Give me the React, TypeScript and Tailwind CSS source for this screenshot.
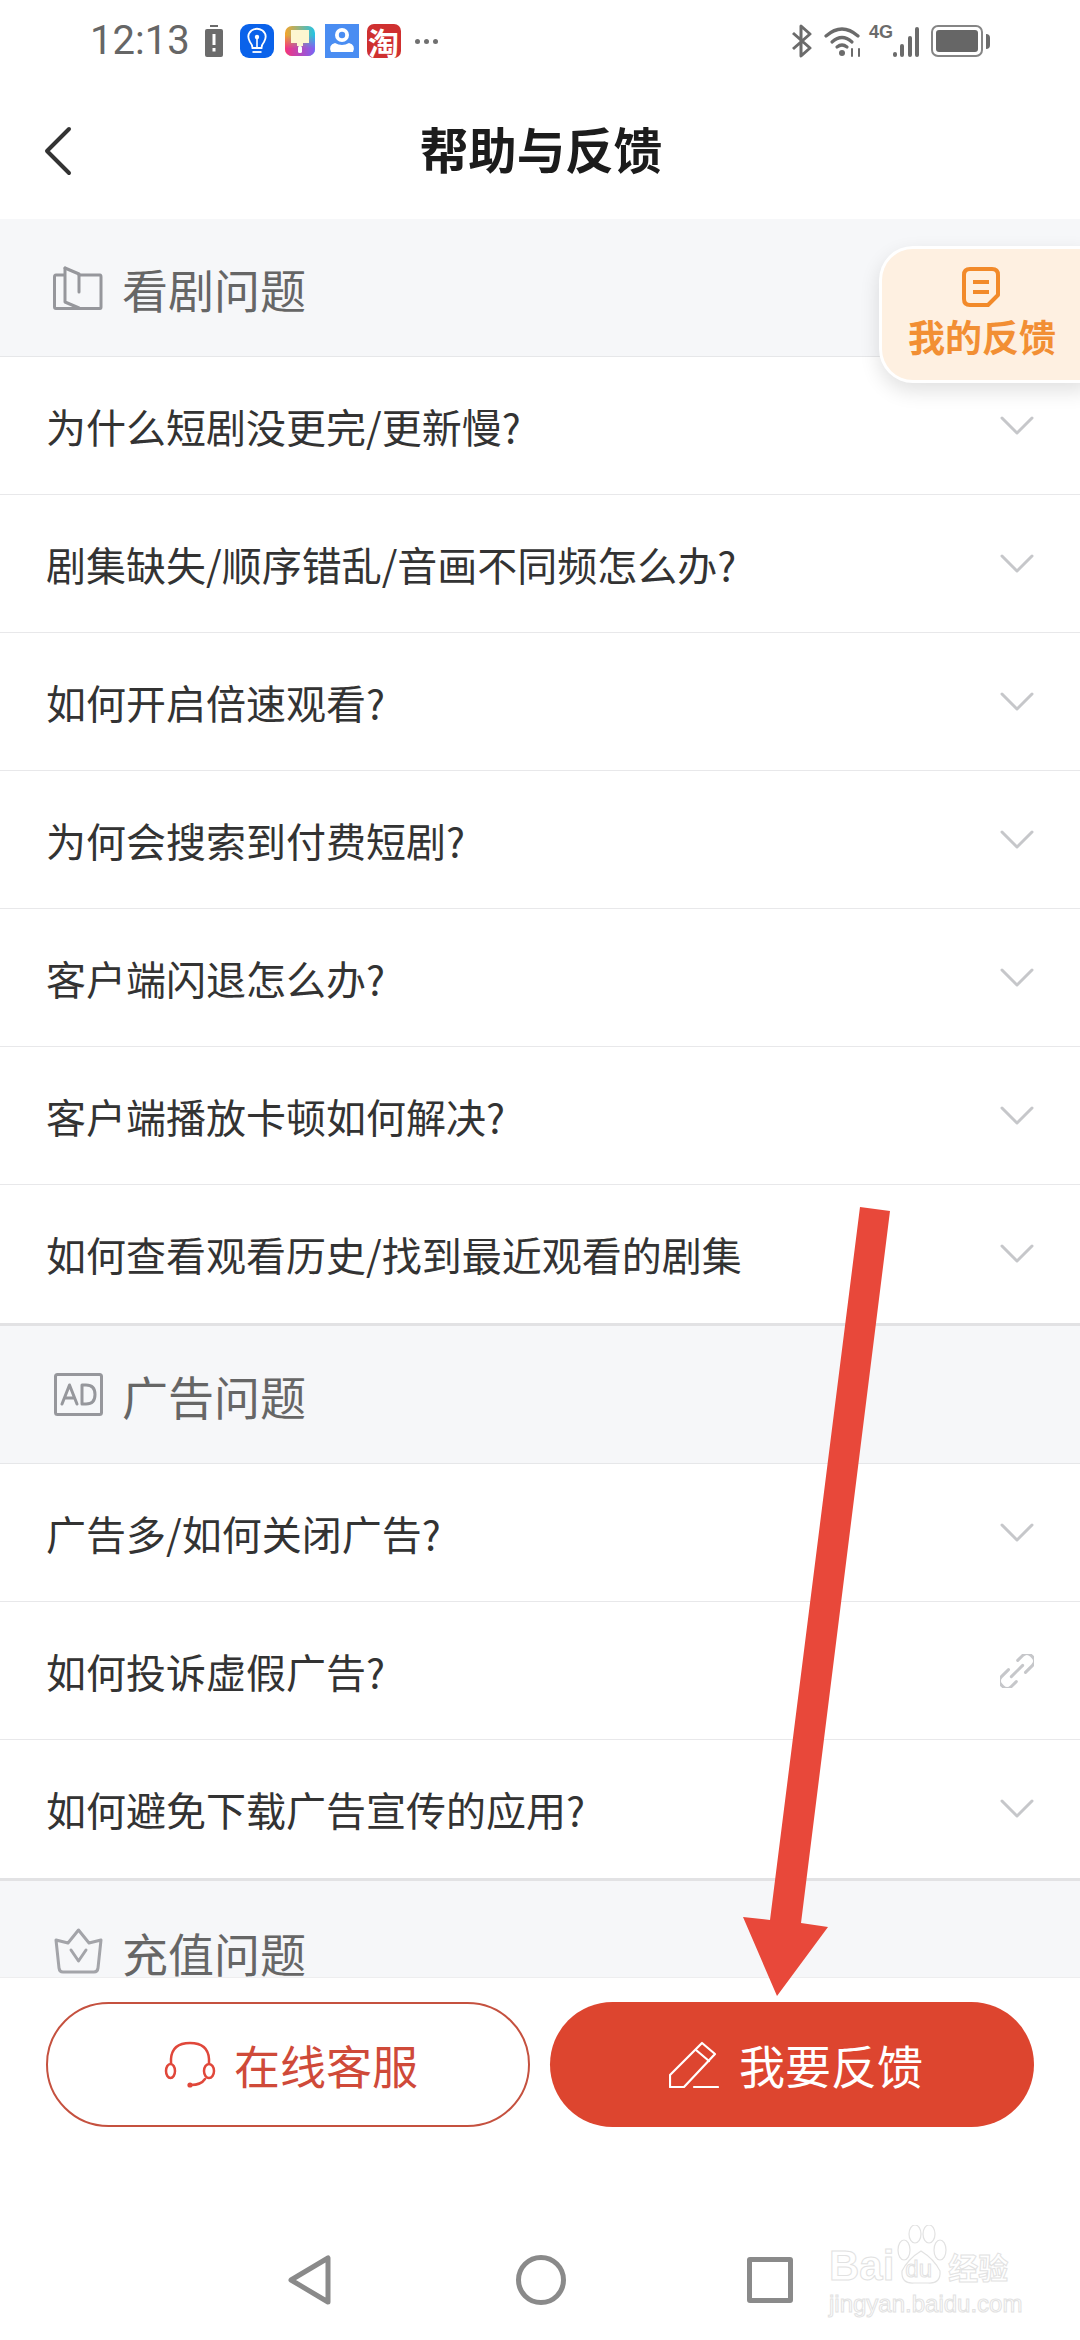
import React from 'react';

const FONT = '"Noto Sans CJK SC", "Noto Sans", sans-serif';

const Chevron = () => (
  <svg width="34" height="20" viewBox="0 0 34 20" fill="none" stroke="#c6c7ca" strokeWidth="3" strokeLinecap="round" strokeLinejoin="round">
    <path d="M2 2 L17 17 L32 2" />
  </svg>
);

const LinkIcon = () => (
  <svg width="34" height="34" viewBox="0 0 34 34" fill="none" stroke="#c6c7ca" strokeWidth="3" strokeLinecap="round" strokeLinejoin="round">
    <g transform="rotate(-45 17 17)">
      <path d="M12 10 H2 Q-4 10 -4 16 V18 Q-4 24 2 24 H9" />
      <path d="M22 24 H32 Q38 24 38 18 V16 Q38 10 32 10 H25" />
      <path d="M9 17 H25" />
    </g>
  </svg>
);

const BookIcon = () => (
  <svg width="50" height="44" viewBox="0 0 50 44" fill="none" stroke="#96979c" strokeWidth="3" strokeLinejoin="round" strokeLinecap="round">
    <path d="M11 9 H3 Q1.5 9 1.5 11 V41 Q1.5 42.5 3 42.5 H47 Q48 42.5 48 41 V11 Q48 9 47 9 H26" />
    <path d="M12 2 L26 8 V26" />
    <path d="M12 2 V36 L26 42" />
  </svg>
);

const AdIcon = () => (
  <svg width="49" height="43" viewBox="0 0 49 43" fill="none" stroke="#96979c" strokeWidth="3" strokeLinejoin="round" strokeLinecap="round">
    <rect x="1.5" y="1.5" width="46" height="40" rx="2" />
    <path d="M8 31 L15.5 12 L23 31 M10.5 25 H20.5" />
    <path d="M28 12 V31 H32 Q41 31 41 21.5 Q41 12 32 12 Z" />
  </svg>
);

const CrownIcon = () => (
  <svg width="49" height="46" viewBox="0 0 49 46" fill="none" stroke="#a3a4a9" strokeWidth="3" strokeLinejoin="round" strokeLinecap="round">
    <path d="M2 12 L14 15 L24.5 2 L35 15 L47 12 L44 40 Q43.5 44 40 44 H9 Q5.5 44 5 40 Z" />
    <path d="M17 22 L24.5 33 L32 22" />
  </svg>
);

const HeadsetIcon = () => (
  <svg width="52" height="48" viewBox="0 0 52 48" fill="none" stroke="#e0473a" strokeWidth="2.5" strokeLinecap="round">
    <path d="M7 22 V18 Q8 2 26 2 Q44 2 45 18 V22" />
    <ellipse cx="6.5" cy="30" rx="4.5" ry="7" />
    <ellipse cx="45" cy="30" rx="5" ry="7" />
    <path d="M41 38 Q37 44 27 44" />
    <circle cx="26" cy="44" r="2.6" fill="#e0473a" stroke="none" />
  </svg>
);

const PencilIcon = () => (
  <svg width="50" height="48" viewBox="0 0 50 48" fill="none" stroke="#ffffff" strokeWidth="2.2" strokeLinecap="round" strokeLinejoin="round">
    <path d="M33 2 L46 13 L15 46 H1 V34 Z" />
    <path d="M27 9 L40 20" />
    <path d="M25 46 H49" />
  </svg>
);

const AppIcons = () => (
  <>
    <svg width="18" height="32" viewBox="0 0 18 32">
      <rect x="5" y="0" width="8" height="2" fill="#6b6b6b" />
      <rect x="0" y="4" width="18" height="28" rx="2" fill="#6b6b6b" />
      <rect x="7.5" y="9" width="3" height="11" fill="#fff" />
      <rect x="7.5" y="23" width="3" height="3.5" fill="#fff" />
    </svg>
    <svg width="34" height="34" viewBox="0 0 34 34" className="ml-[17px]">
      <rect width="34" height="34" rx="9" fill="#0a62ea" />
      <path d="M12.5 24 Q12.5 21 10 18 Q6 11 11.5 6.5 Q17 3 22.5 6.5 Q28 11 24 18 Q21.5 21 21.5 24 Z" fill="none" stroke="#fff" strokeWidth="1.8" />
      <path d="M12.5 28 H21.5" stroke="#fff" strokeWidth="1.8" />
      <circle cx="17" cy="13" r="2.2" fill="#fff" />
      <path d="M17 14 V23" stroke="#fff" strokeWidth="1.6" />
    </svg>
    <svg width="30" height="30" viewBox="0 0 30 30" className="ml-[11px]">
      <defs>
        <linearGradient id="paintTop" x1="0" y1="0" x2="1" y2="0">
          <stop offset="0" stopColor="#f5a52a" />
          <stop offset="1" stopColor="#22c3e6" />
        </linearGradient>
        <linearGradient id="paintBottom" x1="0" y1="0" x2="1" y2="0">
          <stop offset="0" stopColor="#f5327e" />
          <stop offset="1" stopColor="#7c62f6" />
        </linearGradient>
        <linearGradient id="paintFade" x1="0" y1="0" x2="0" y2="1">
          <stop offset="0.3" stopColor="#fff" stopOpacity="0" />
          <stop offset="0.75" stopColor="#fff" stopOpacity="1" />
        </linearGradient>
        <mask id="paintMask">
          <rect width="30" height="30" fill="url(#paintFade)" />
        </mask>
      </defs>
      <rect width="30" height="30" rx="7" fill="url(#paintTop)" />
      <rect width="30" height="30" rx="7" fill="url(#paintBottom)" mask="url(#paintMask)" />
      <path d="M6 4 H24 V17 H18 V20 H12 V17 H6 Z" fill="#fdf6d0" />
      <rect x="13" y="20" width="4" height="7" rx="1.5" fill="#fff" />
    </svg>
    <svg width="34" height="34" viewBox="0 0 34 34" className="ml-[10px]">
      <rect width="34" height="34" fill="#4a8df2" />
      <circle cx="17" cy="11" r="7" fill="#fff" />
      <circle cx="17" cy="11" r="3.2" fill="#4a8df2" />
      <path d="M6 28 Q3 21 10 19 Q17 23 24 19 Q31 21 28 28 Z" fill="#fff" />
    </svg>
    <div className="ml-[8px] flex h-[34px] w-[34px] items-center justify-center rounded-[7px] bg-[#cf3030] text-[31px] leading-none font-bold text-white">
      淘
    </div>
    <div className="ml-[14px] flex gap-[4px]">
      <span className="h-[5px] w-[5px] rounded-full bg-[#707070]" />
      <span className="h-[5px] w-[5px] rounded-full bg-[#707070]" />
      <span className="h-[5px] w-[5px] rounded-full bg-[#707070]" />
    </div>
  </>
);

const SystemIcons = () => (
  <>
    <svg width="22" height="34" viewBox="0 0 22 34" fill="none" stroke="#6b6b6b" strokeWidth="3" strokeLinejoin="round">
      <path d="M2 9 L19 24 L10 32 V2 L19 10 L2 25" />
    </svg>
    <svg width="38" height="32" viewBox="0 0 38 32" fill="none" stroke="#6b6b6b" strokeWidth="3.2" strokeLinecap="round" className="ml-[11px]">
      <path d="M2 11 Q18 -3 34 11" />
      <path d="M8 17 Q18 8 28 17" />
      <path d="M13 22 Q18 18 23 22" />
      <circle cx="18" cy="28" r="3" fill="#6b6b6b" stroke="none" />
      <path d="M28 24 V31 M35 24 V31" strokeWidth="2" />
    </svg>
    <div className="relative ml-[7px] h-[32px] w-[50px]">
      <span className="absolute top-[-2px] left-0 font-['Liberation_Sans_Narrow','Liberation_Sans',sans-serif] text-[18px] leading-[18px] font-bold text-[#6b6b6b]">4G</span>
      <div className="absolute right-0 bottom-0 flex items-end gap-[3.5px]">
        <span className="h-[5px] w-[4px] rounded-full bg-[#6b6b6b]" />
        <span className="h-[13px] w-[4px] rounded-full bg-[#6b6b6b]" />
        <span className="h-[21px] w-[4px] rounded-full bg-[#6b6b6b]" />
        <span className="h-[30px] w-[4px] rounded-full bg-[#6b6b6b]" />
      </div>
    </div>
    <div className="ml-[12px] flex items-center gap-[3px]">
      <div className="flex h-[32px] w-[52px] items-center rounded-[7px] border-[2.5px] border-[#858585] p-[3px]">
        <div className="h-full w-full rounded-[3px] bg-[#666666]" />
      </div>
      <div className="h-[15px] w-[4px] rounded-r-full bg-[#6b6b6b]" />
    </div>
  </>
);

const SectionHeader = ({ icon, title }: { icon: React.ReactNode; title: string }) => (
  <div className="flex h-[138px] items-center gap-[19px] border-b border-[#e6e7e9] bg-[#f6f7f9] pl-[53px]">
    <div className="flex w-[50px] justify-center">{icon}</div>
    <span className="text-[46px] leading-[60px] text-[#666666]">{title}</span>
  </div>
);

const FaqRow = ({ text, last, link }: { text: string; last?: boolean; link?: boolean }) => (
  <div className={`flex items-center justify-between bg-white pr-[46px] pl-[46px] ${last ? 'h-[141px] border-b-[3px] border-[#e2e2e4]' : 'h-[138px] border-b border-[#e8e8ea]'}`}>
    <span className="text-[40px] leading-[56px] text-[#333333]">{text}</span>
    {link ? <LinkIcon /> : <Chevron />}
  </div>
);

const watching = [
  '为什么短剧没更完/更新慢?',
  '剧集缺失/顺序错乱/音画不同频怎么办?',
  '如何开启倍速观看?',
  '为何会搜索到付费短剧?',
  '客户端闪退怎么办?',
  '客户端播放卡顿如何解决?',
  '如何查看观看历史/找到最近观看的剧集',
];

export default function App() {
  return (
    <div className="relative flex h-[2340px] w-[1080px] flex-col overflow-hidden bg-white" style={{ fontFamily: FONT }}>
      {/* status bar */}
      <div className="flex h-[82px] shrink-0 items-start justify-between pt-[24px] pr-[90px] pl-[90px]">
        <div className="flex h-[34px] items-center">
          <span className="mr-[15px] font-['Roboto'] text-[40px] leading-[34px] text-[#666666]">12:13</span>
          <AppIcons />
        </div>
        <div className="flex h-[34px] items-center">
          <SystemIcons />
        </div>
      </div>

      {/* title bar */}
      <div className="relative flex h-[137px] shrink-0 items-center justify-center">
        <svg width="28" height="50" viewBox="0 0 28 50" fill="none" stroke="#333333" strokeWidth="4" strokeLinecap="round" strokeLinejoin="round" className="absolute top-[44px] left-[44px]">
          <path d="M25 3 L3 25 L25 47" />
        </svg>
        <h1 className="mt-[-5px] ml-[2px] text-[48.5px] leading-[64px] font-bold text-[#1c1c1c]">帮助与反馈</h1>
      </div>

      {/* list */}
      <div className="h-[1759px] shrink-0 overflow-hidden">
        <SectionHeader icon={<BookIcon />} title="看剧问题" />
        {watching.map((q, i) => (
          <FaqRow key={q} text={q} last={i === watching.length - 1} />
        ))}
        <SectionHeader icon={<AdIcon />} title="广告问题" />
        <FaqRow text="广告多/如何关闭广告?" />
        <FaqRow text="如何投诉虚假广告?" link />
        <FaqRow text="如何避免下载广告宣传的应用?" last />
        <div className="flex h-[97px] items-start gap-[19px] border-b border-[#eeeeef] bg-[#f6f7f9] pt-[46px] pl-[53px]">
          <div className="mt-[1px] flex w-[50px] justify-center">
            <CrownIcon />
          </div>
          <span className="text-[46px] leading-[50px] text-[#666666]">充值问题</span>
        </div>
      </div>

      {/* buttons */}
      <div className="flex shrink-0 gap-[20px] px-[46px] pt-[24px]">
        <button className="flex h-[125px] w-[484px] items-center justify-center gap-[18px] rounded-full border-[2.5px] border-[#c5513f] bg-white pl-[6px] text-[46px] text-[#cf4a39]">
          <HeadsetIcon />
          在线客服
        </button>
        <button className="flex h-[125px] w-[484px] items-center justify-center gap-[20px] rounded-full bg-[#dd452f] pl-[8px] text-[46px] text-white">
          <PencilIcon />
          我要反馈
        </button>
      </div>

      {/* nav bar */}
      <div className="relative mt-[128px] flex items-center pl-[288px]">
        <svg width="44" height="50" viewBox="0 0 44 50" fill="none" stroke="#8a8a8a" strokeWidth="5" strokeLinejoin="round">
          <path d="M40 3 V47 L3 25 Z" />
        </svg>
        <div className="ml-[184px] h-[50px] w-[50px] rounded-full border-[5px] border-[#8a8a8a]" />
        <div className="ml-[181px] h-[46px] w-[46px] rounded-[3px] border-[5px] border-[#8a8a8a]" />
        {/* watermark */}
        <div className="absolute top-[-30px] left-[829px] w-[200px] font-['Liberation_Sans'] text-transparent [-webkit-text-stroke:1px_#e2e2e2]">
          <div className="flex h-[60px] items-end text-[42px] leading-[38px] font-bold">
            Bai
            <div className="relative h-[60px] w-[54px]">
              <svg width="54" height="60" viewBox="0 0 54 60" fill="none" stroke="#e2e2e2" strokeWidth="1.2">
                <ellipse cx="10" cy="25" rx="6" ry="10" />
                <ellipse cx="21" cy="9" rx="6" ry="9" />
                <ellipse cx="35" cy="9" rx="6" ry="9" />
                <ellipse cx="46" cy="25" rx="6" ry="10" />
                <path d="M27 26 Q14 34 8 46 Q7 59 20 58 H34 Q47 59 46 46 Q40 34 27 26 Z" />
              </svg>
              <span className="absolute bottom-[3px] left-[11px] text-[24px] leading-[26px] font-normal">du</span>
            </div>
            <span className="font-['Noto_Sans_CJK_SC'] text-[30px]">经验</span>
          </div>
          <div className="mt-[5px] text-[24px] leading-[28px] whitespace-nowrap">jingyan.baidu.com</div>
        </div>
      </div>

      {/* floating feedback tab */}
      <div className="absolute top-[246px] left-[879px] flex h-[137px] w-[210px] flex-col items-center rounded-l-[34px] border-[3px] border-r-0 border-white bg-[#fef0e1] pr-[9px] shadow-[0_8px_20px_rgba(0,0,0,0.12)]">
        <svg width="38" height="40" viewBox="0 0 38 40" fill="none" stroke="#f28a2a" strokeWidth="4" strokeLinejoin="round" className="mt-[18px]">
          <path d="M8 2 H30 Q36 2 36 8 V28 L26 38 H8 Q2 38 2 32 V8 Q2 2 8 2 Z" />
          <path d="M11 15 H27 M11 25 H27" />
        </svg>
        <span className="mt-[5px] ml-[2px] text-[37px] leading-[48px] font-bold whitespace-nowrap text-[#f28f34]">我的反馈</span>
      </div>

      {/* annotation arrow */}
      <svg width="1080" height="2340" viewBox="0 0 1080 2340" className="pointer-events-none absolute top-0 left-0">
        <path d="M860 1207 L890 1211 L801 1923 L828 1927 L777 1996 L743 1917 L770 1920 Z" fill="#e8483a" />
      </svg>
    </div>
  );
}
